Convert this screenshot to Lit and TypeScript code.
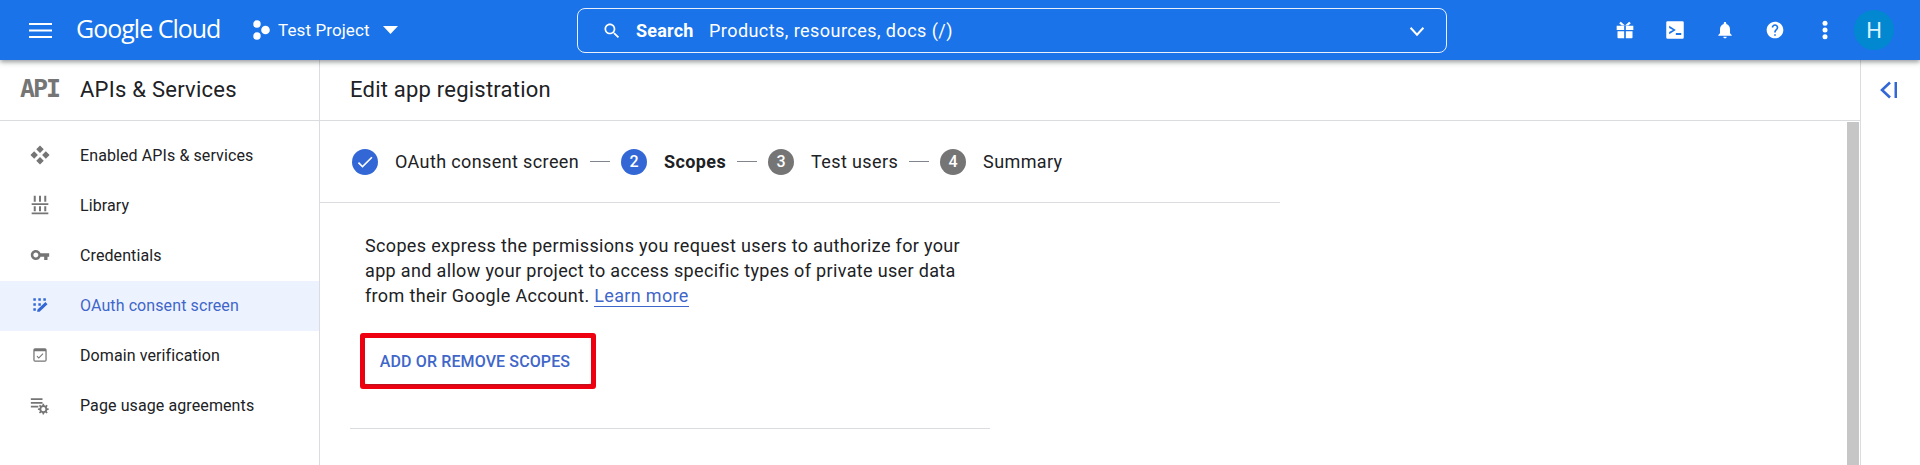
import { LitElement, html, css, svg } from "lit";
import { customElement } from "lit/decorators.js";

const navIcons: Record<string, unknown> = {
  apis: svg`<path d="M12 .5 7.500 5 12 9.500 16.500 5zM5 7.500.5 12 5 16.500 9.500 12zM19 7.500 14.500 12l4.500 4.500 4.500-4.500zM12 14.500 7.500 19l4.500 4.500 4.500-4.500z"/><circle cx="12" cy="12" r="1.600" fill="#fff"/>`,
  library: svg`<path d="M2 21h20v2.200H2zM2 9.800h20V12H2zM4.500 1h2.400v7H4.500zM10.800 1h2.400v7h-2.400zM17.100 1h2.400v7h-2.400zM4.500 13.500h2.400v6H4.500zM10.800 13.500h2.400v6h-2.400zM17.100 13.500h2.400v6h-2.400z"/>`,
  key: svg`<path d="M12.650 10C11.830 7.670 9.610 6 7 6c-3.310 0-6 2.690-6 6s2.690 6 6 6c2.610 0 4.830-1.670 5.650-4H17v4h4v-4h2v-4H12.650zM7 15c-1.650 0-3-1.350-3-3s1.350-3 3-3 3 1.350 3 3-1.350 3-3 3z"/>`,
  oauth: svg`<path d="M4 4h3v3H4zM10 4h3v3h-3zM16 4h3v3h-3zM4 10h3v3H4zM4 16h3v3H4zM10 10h3v3h-3zM8.500 20l.5-2.500 9.500-9 2.500 2.500-9.500 9z"/>`,
  domain: svg`<path fill-rule="evenodd" d="M6 4h12a2 2 0 0 1 2 2v12a2 2 0 0 1-2 2H6a2 2 0 0 1-2-2V6a2 2 0 0 1 2-2zm-.5 3.500V18.500h13V7.500z"/><path d="m10.500 16.500-2.600-2.600.9-.9 1.700 1.700 4.700-4.700.9.9z"/>`,
  usage: svg`<path d="M1 4h14v2H1zM1 8.500h14v2H1zM1 13h9v2H1z"/><path d="M22.500 17.800v-1.600l-1.900-.4-.5-1.200 1.100-1.600-1.200-1.200-1.600 1.100-1.200-.5-.4-1.900h-1.600l-.4 1.900-1.200.5-1.600-1.100-1.200 1.200 1.100 1.600-.5 1.200-1.900.4v1.600l1.900.4.5 1.200-1.100 1.600 1.200 1.200 1.600-1.100 1.200.5.4 1.900h1.600l.4-1.900 1.200-.5 1.600 1.100 1.200-1.200-1.100-1.600.5-1.200zM16 19.500a2.500 2.500 0 1 1 0-5 2.500 2.500 0 0 1 0 5z"/>`,
};

const nav = [
  { icon: "apis", label: "Enabled APIs & services" },
  { icon: "library", label: "Library" },
  { icon: "key", label: "Credentials" },
  { icon: "oauth", label: "OAuth consent screen", active: true },
  { icon: "domain", label: "Domain verification" },
  { icon: "usage", label: "Page usage agreements" },
];

const steps = [
  { mark: "check", label: "OAuth consent screen", state: "done" },
  { mark: "2", label: "Scopes", state: "current" },
  { mark: "3", label: "Test users", state: "" },
  { mark: "4", label: "Summary", state: "" },
];

@customElement("app-root")
export class AppRoot extends LitElement {
  static styles = css`
    :host { display: flex; flex-direction: column; height: 465px; overflow: hidden; font-family: Roboto, "Liberation Sans", sans-serif; color: #202124; background: #fff; }
    svg { display: block; fill: currentColor; flex: none; }
    .top { height: 60px; flex: none; background: #1a73e8; color: #fff; display: flex; align-items: center; position: relative; z-index: 2; box-shadow: 0 2px 5px rgba(60,64,67,.55); }
    .burger { margin-left: 28px; width: 24px; height: 24px; }
    .logo { margin-left: 24px; width: 144px; font: 400 25px/30px "Open Sans", sans-serif; letter-spacing: -1px; white-space: nowrap; margin-top: -4px; }
    .project { margin-left: 32px; display: flex; align-items: center; }
    .project span { margin-left: 8px; width: 92px; font-size: 17px; letter-spacing: .1px; white-space: nowrap; }
    .caret { margin-left: 13px; }
    .search { margin-left: 179px; width: 870px; height: 45px; box-sizing: border-box; border: 1px solid #e8f0fe; border-radius: 8px; display: flex; align-items: center; padding-left: 24px; margin-top: 1px; }
    .search b { margin-left: 14px; font-size: 18px; font-weight: 700; width: 73px; letter-spacing: .2px; }
    .search i { font-style: normal; font-size: 18px; letter-spacing: .45px; flex: 1; white-space: nowrap; }
    .chev { margin-right: 18px; }
    .actions { margin-left: 168px; display: flex; align-items: center; gap: 30px; }
    .avatar { margin-left: -11px; width: 40px; height: 40px; border-radius: 50%; background: #0288d1; color: #d8f3ff; display: flex; align-items: center; justify-content: center; font-size: 22px; }

    .body { flex: 1; display: flex; min-height: 0; }
    .side { width: 320px; box-sizing: border-box; border-right: 1px solid #dadce0; flex: none; }
    .side-head { height: 61px; box-sizing: border-box; border-bottom: 1px solid #dadce0; display: flex; align-items: center; padding: 0 0 2px 20px; margin-bottom: 10px; }
    .api { width: 60px; font: 700 25px/30px "DejaVu Sans Mono", monospace; color: #757575; letter-spacing: -2px; }
    .side-head h1 { margin: 0; font-size: 22px; font-weight: 400; letter-spacing: .25px; color: #202124; }
    .item { height: 50px; box-sizing: border-box; padding-bottom: 2px; display: flex; align-items: center; font-size: 16px; letter-spacing: .1px; color: #202124; }
    .item svg { margin-left: 30px; margin-right: 30px; color: #757575; }
    .item.active { background: #edf3fe; color: #3f66c9; }
    .item.active svg { color: #3367d6; }

    .main { flex: 1; min-width: 0; display: flex; flex-direction: column; }
    .main-head { height: 61px; flex: none; box-sizing: border-box; border-bottom: 1px solid #dadce0; display: flex; align-items: center; padding: 0 0 2px 30px; }
    .main-head h2 { margin: 0; font-size: 22px; font-weight: 400; letter-spacing: .22px; }
    .scroll { flex: 1; display: flex; min-height: 0; }
    .content { flex: 1; min-width: 0; }
    .bar { width: 12px; margin: 1px 1px 0 0; background: #c6c6c6; flex: none; }
    .stepper { width: 960px; height: 82px; box-sizing: border-box; border-bottom: 1px solid #dadce0; display: flex; align-items: center; padding-left: 32px; }
    .step { display: flex; align-items: center; font-size: 18px; letter-spacing: .38px; white-space: nowrap; }
    .num { width: 26px; height: 26px; border-radius: 50%; background: #757575; color: #fff; font-size: 16px; font-weight: 500; letter-spacing: 0; display: flex; align-items: center; justify-content: center; margin-right: 17px; }
    .done .num, .current .num { background: #3367d6; }
    .current { font-weight: 700; }
    .dash { width: 20px; height: 1px; background: #80868b; margin: 0 11px; flex: none; }
    .block { width: 640px; margin-left: 30px; box-sizing: border-box; padding: 30px 0 39px 15px; border-bottom: 1px solid #dadce0; }
    .block p { margin: 0; width: 610px; font-size: 18px; line-height: 25px; letter-spacing: .34px; color: #202124; }
    .block a { color: #3f66c9; text-decoration: none; border-bottom: 1px solid #3f66c9; }
    .btn-frame { display: inline-block; margin: 25px 0 0 -5px; border: 5px solid #ef0010; border-radius: 3px; }
    .btn { display: block; width: 226px; height: 46px; padding: 0 6px 0 0; border: 0; background: #fff; border-radius: 3px; box-shadow: 0 1px 2px rgba(60,64,67,.35); color: #3f66c9; font: 500 16px Roboto, sans-serif; letter-spacing: .12px; }

    .rail { width: 60px; box-sizing: border-box; border-left: 1px solid #dadce0; flex: none; color: #3367d6; padding: 18px 0 0 16px; }
  `;

  render() {
    return html`
      <header class="top">
        <svg class="burger" viewBox="0 0 24 24"><path d="M1 5h23v2H1zM1 11.500h23v2H1zM1 18h23v2H1z"/></svg>
        <div class="logo">Google Cloud</div>
        <div class="project">
          <svg width="18" height="20" viewBox="0 0 18 20"><circle cx="5" cy="4" r="3.700"/><circle cx="5" cy="16" r="3.700"/><circle cx="13.500" cy="10" r="4.300"/></svg>
          <span>Test Project</span>
          <svg class="caret" width="15" height="8" viewBox="0 0 15 8"><path d="M0 0h15L7.500 8z"/></svg>
        </div>
        <div class="search">
          <svg width="20" height="20" viewBox="0 0 24 24"><path d="M15.500 14h-.79l-.28-.27C15.410 12.590 16 11.110 16 9.500 16 5.910 13.090 3 9.500 3S3 5.910 3 9.500 5.910 16 9.500 16c1.610 0 3.090-.59 4.230-1.570l.27.28v.79l5 4.990L20.490 19l-4.990-5zm-6 0C7.010 14 5 11.990 5 9.500S7.010 5 9.500 5 14 7.010 14 9.500 11.990 14 9.500 14z"/></svg>
          <b>Search</b>
          <i>Products, resources, docs (/)</i>
          <svg class="chev" width="22" height="22" viewBox="0 0 24 24"><path d="M5 8.500 12 16l7-7.500" fill="none" stroke="currentColor" stroke-width="2.200"/></svg>
        </div>
        <div class="actions">
          <svg width="20" height="20" viewBox="0 0 24 24"><path d="M2 7h9v5H2zM13 7h9v5h-9zM3 13.500h8V22H4a1 1 0 0 1-1-1zM13 13.500h8V21a1 1 0 0 1-1 1h-7z"/><path d="M12 6.500 7 2 5 4l3 2.500zM12 6.500 17 2l2 2-3 2.500z"/></svg>
          <svg width="20" height="20" viewBox="0 0 24 24"><path fill-rule="evenodd" d="M3 1.500h18A1.500 1.500 0 0 1 22.500 3v18a1.500 1.500 0 0 1-1.500 1.500H3A1.500 1.500 0 0 1 1.500 21V3A1.500 1.500 0 0 1 3 1.500zM5 7v2.500L9.500 12 5 14.500V17l8-5zM13 15.500V18h6.500v-2.500z"/></svg>
          <svg width="20" height="20" viewBox="0 0 24 24"><path d="M12 22c1.100 0 2-.9 2-2h-4c0 1.100.9 2 2 2zm6-6v-5c0-3.070-1.630-5.640-4.500-6.320V4c0-.83-.67-1.500-1.500-1.500s-1.500.67-1.500 1.500v.68C7.640 5.360 6 7.920 6 11v5l-2 2v1h16v-1l-2-2z"/></svg>
          <svg width="20" height="20" viewBox="0 0 24 24"><path d="M12 2C6.480 2 2 6.480 2 12s4.480 10 10 10 10-4.480 10-10S17.520 2 12 2zm1 17h-2v-2h2v2zm2.070-7.750-.9.92C13.450 12.900 13 13.500 13 15h-2v-.5c0-1.100.45-2.100 1.170-2.830l1.240-1.260c.37-.36.59-.86.59-1.410 0-1.100-.9-2-2-2s-2 .9-2 2H8c0-2.210 1.790-4 4-4s4 1.790 4 4c0 .88-.36 1.680-.93 2.250z"/></svg>
          <svg width="20" height="20" viewBox="0 0 24 24"><circle cx="12" cy="4" r="3"/><circle cx="12" cy="12" r="3"/><circle cx="12" cy="20" r="3"/></svg>
          <div class="avatar">H</div>
        </div>
      </header>
      <div class="body">
        <aside class="side">
          <div class="side-head"><div class="api">API</div><h1>APIs &amp; Services</h1></div>
          ${nav.map(
            (n) => html`<div class="item ${n.active ? "active" : ""}">
              <svg width="20" height="20" viewBox="0 0 24 24">${navIcons[n.icon]}</svg>${n.label}
            </div>`
          )}
        </aside>
        <main class="main">
          <div class="main-head"><h2>Edit app registration</h2></div>
          <div class="scroll">
            <div class="content">
              <div class="stepper">
                ${steps.map(
                  (s, i) => html`${i ? html`<div class="dash"></div>` : ""}
                    <div class="step ${s.state}">
                      <div class="num">
                        ${s.mark === "check"
                          ? html`<svg width="20" height="20" viewBox="0 0 24 24"><path d="M9 16.170 4.830 12l-1.420 1.410L9 19 21 7l-1.410-1.410z"/></svg>`
                          : s.mark}
                      </div>
                      ${s.label}
                    </div>`
                )}
              </div>
              <div class="block">
                <p>Scopes express the permissions you request users to authorize for your app and allow your project to access specific types of private user data from their Google Account. <a>Learn more</a></p>
                <div class="btn-frame"><button class="btn">ADD OR REMOVE SCOPES</button></div>
              </div>
            </div>
            <div class="bar"></div>
          </div>
        </main>
        <div class="rail">
          <svg width="24" height="24" viewBox="0 0 24 24"><path d="M13 4.500 5 12l8 7.500" fill="none" stroke="currentColor" stroke-width="2.600"/><path d="M17.500 4h2.500v16h-2.500z"/></svg>
        </div>
      </div>
    `;
  }
}
